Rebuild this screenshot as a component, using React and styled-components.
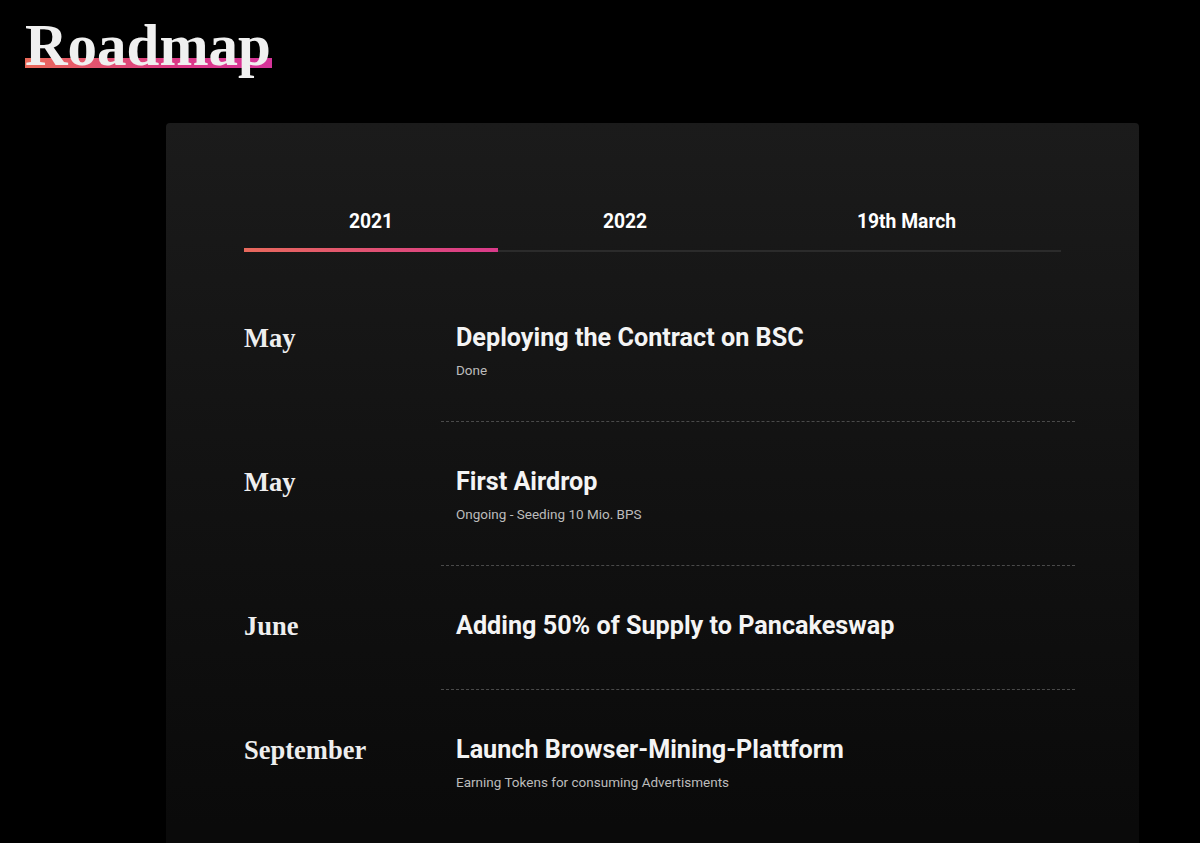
import React from "react";
import styled, { createGlobalStyle } from "styled-components";

const Global = createGlobalStyle`
  html, body { margin: 0; padding: 0; background: #000; }
  body { font-family: "Roboto", "Liberation Sans", sans-serif; color: #f2f2f2; overflow: hidden; }
  * { box-sizing: border-box; }
`;

const Page = styled.div`
  padding: 10px 0 0 25px;
  min-height: 843px;
`;

const Heading = styled.h1`
  margin: 0;
  font-family: "Liberation Serif", "Times New Roman", serif;
  font-weight: 700;
  font-size: 59px;
  line-height: 70px;
  color: #f0f0f0;
`;

const Highlight = styled.span`
  display: inline-block;
  padding-right: 1px;
  background-image: linear-gradient(90deg, #ea6a5a 0%, #dc3a86 60%, #d6349a 100%);
  background-repeat: no-repeat;
  background-size: 100% 10px;
  background-position: 0 48px;
`;

const Card = styled.section`
  margin: 43px 0 0 141px;
  width: 973px;
  min-height: 780px;
  border-radius: 4px;
  padding: 87px 64px 60px 78px;
  background: linear-gradient(180deg, #1b1b1b 0%, #121212 45%, #0a0a0a 90%);
`;

const Tabs = styled.div`
  display: flex;
  margin-right: 14px;
  border-bottom: 2px solid #2b2b2b;
`;

const Tab = styled.button`
  position: relative;
  flex: 1 1 auto;
  border: 0;
  background: none;
  padding: 0 0 16px;
  font-family: "Roboto", "Liberation Sans", sans-serif;
  font-weight: 700;
  font-size: 19.3px;
  line-height: 24px;
  color: #fff;
  text-align: center;
  cursor: pointer;

  &::after {
    content: "";
    position: absolute;
    left: 0;
    right: 0;
    bottom: -2px;
    height: 4px;
    background: linear-gradient(90deg, #e8695c 0%, #d93a8a 100%);
    opacity: ${(p) => (p.$active ? 1 : 0)};
  }
`;

const Rows = styled.div`
  margin-top: 26px;
`;

const Row = styled.div`
  display: flex;
  align-items: flex-start;
`;

const Month = styled.div`
  flex: 0 0 197px;
  padding-top: 44px;
  font-family: "Liberation Serif", "Times New Roman", serif;
  font-weight: 700;
  font-size: 26.5px;
  line-height: 32px;
  color: #eeeeee;
`;

const Content = styled.div`
  flex: 1;
  padding: 44px 0 41px 15px;
  border-bottom: 1px dashed ${(p) => (p.$last ? "transparent" : "#4a4a4a")};
`;

const Title = styled.h3`
  margin: 0 0 6px;
  font-family: "Roboto", "Liberation Sans", sans-serif;
  font-weight: 700;
  font-size: 25.2px;
  line-height: 32px;
  color: #f4f4f4;
`;

const Sub = styled.p`
  margin: 1px 0 0;
  font-family: "Roboto", "Liberation Sans", sans-serif;
  font-size: 13.5px;
  line-height: 20px;
  color: #bcbcbc;
`;

const tabs = ["2021", "2022", "19th March"];

const items = [
  { month: "May", title: "Deploying the Contract on BSC", sub: "Done" },
  { month: "May", title: "First Airdrop", sub: "Ongoing - Seeding 10 Mio. BPS" },
  { month: "June", title: "Adding 50% of Supply to Pancakeswap" },
  { month: "September", title: "Launch Browser-Mining-Plattform", sub: "Earning Tokens for consuming Advertisments" },
];

export default function App() {
  return (
    <>
      <Global />
      <Page>
        <Heading>
          <Highlight>Roadmap</Highlight>
        </Heading>
        <Card>
          <Tabs>
            {tabs.map((t, i) => (
              <Tab key={t} $active={i === 0}>
                {t}
              </Tab>
            ))}
          </Tabs>
          <Rows>
            {items.map((it, i) => (
              <Row key={i}>
                <Month>{it.month}</Month>
                <Content $last={i === items.length - 1}>
                  <Title>{it.title}</Title>
                  {it.sub && <Sub>{it.sub}</Sub>}
                </Content>
              </Row>
            ))}
          </Rows>
        </Card>
      </Page>
    </>
  );
}
